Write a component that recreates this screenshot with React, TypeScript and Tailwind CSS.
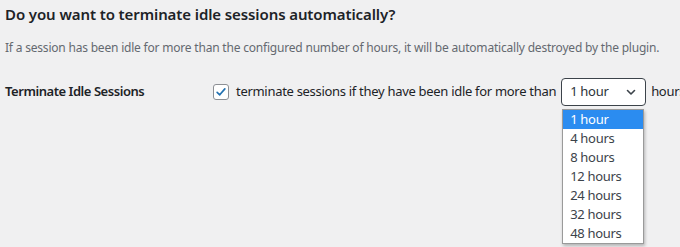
import React from 'react';

const options = ['1 hour', '4 hours', '8 hours', '12 hours', '24 hours', '32 hours', '48 hours'];

const App: React.FC = () => {
  return (
    <div
      className="w-[680px] h-[247px] overflow-hidden bg-[#f0f0f1] text-[#1d2327]"
      style={{ fontFamily: '"Segoe UI", "Noto Sans", sans-serif' }}
    >
      <div className="pl-[5px] pt-[3px]">
        <h2 className="text-[15px] font-semibold leading-[22px] tracking-[-0.1px] whitespace-nowrap">
          Do you want to terminate idle sessions automatically?
        </h2>
        <p className="mt-[14px] text-[12px] leading-[18px] tracking-[-0.2px] text-[#646970] whitespace-nowrap">
          If a session has been idle for more than the configured number of hours, it will be automatically destroyed by the plugin.
        </p>

        <div className="mt-[21px] flex items-center whitespace-nowrap">
          <div className="w-[208px] shrink-0 text-[13px] font-semibold tracking-[-0.45px]">Terminate Idle Sessions</div>
          <div className="flex items-center text-[13px] tracking-[-0.3px]">
            {/* checkbox */}
            <span className="w-[16px] h-[16px] shrink-0 rounded-[3px] border border-[#8c8f94] bg-white flex items-center justify-center">
              <svg width="14" height="14" viewBox="0 0 20 20">
                <path d="M4.5 10.5 L8.2 14 L15.5 5.5" fill="none" stroke="#2271b1" strokeWidth="2.4" strokeLinecap="round" strokeLinejoin="round" />
              </svg>
            </span>
            <span className="ml-[7px]">terminate sessions if they have been idle for more than</span>

            {/* select, opened */}
            <div className="relative ml-[5px] shrink-0">
              <div className="w-[85px] h-[28px] rounded-[4px] border border-[#3c434a] bg-white flex items-center justify-between pl-[8px] pr-[8px] text-[#2c3338]">
                <span>1 hour</span>
                <svg width="12" height="12" viewBox="0 0 12 12">
                  <path d="M2.5 4.5 L6 8 L9.5 4.5" fill="none" stroke="#3c434a" strokeWidth="1.6" strokeLinecap="round" strokeLinejoin="round" />
                </svg>
              </div>
              <ul className="absolute left-[1px] top-[31px] w-[82px] bg-white border border-[#9a9a9a] shadow-[1px_2px_3px_rgba(0,0,0,0.25)]">
                {options.map((o, i) => (
                  <li
                    key={o}
                    className={
                      i === 0
                        ? 'h-[19px] leading-[19px] pl-[7px] bg-[#2b8cf0] text-white'
                        : 'h-[19px] leading-[19px] pl-[7px] text-[#3c434a]'
                    }
                  >
                    {o}
                  </li>
                ))}
              </ul>
            </div>
            <span className="ml-[5px]">hours</span>
          </div>
        </div>
      </div>
    </div>
  );
};

export default App;
